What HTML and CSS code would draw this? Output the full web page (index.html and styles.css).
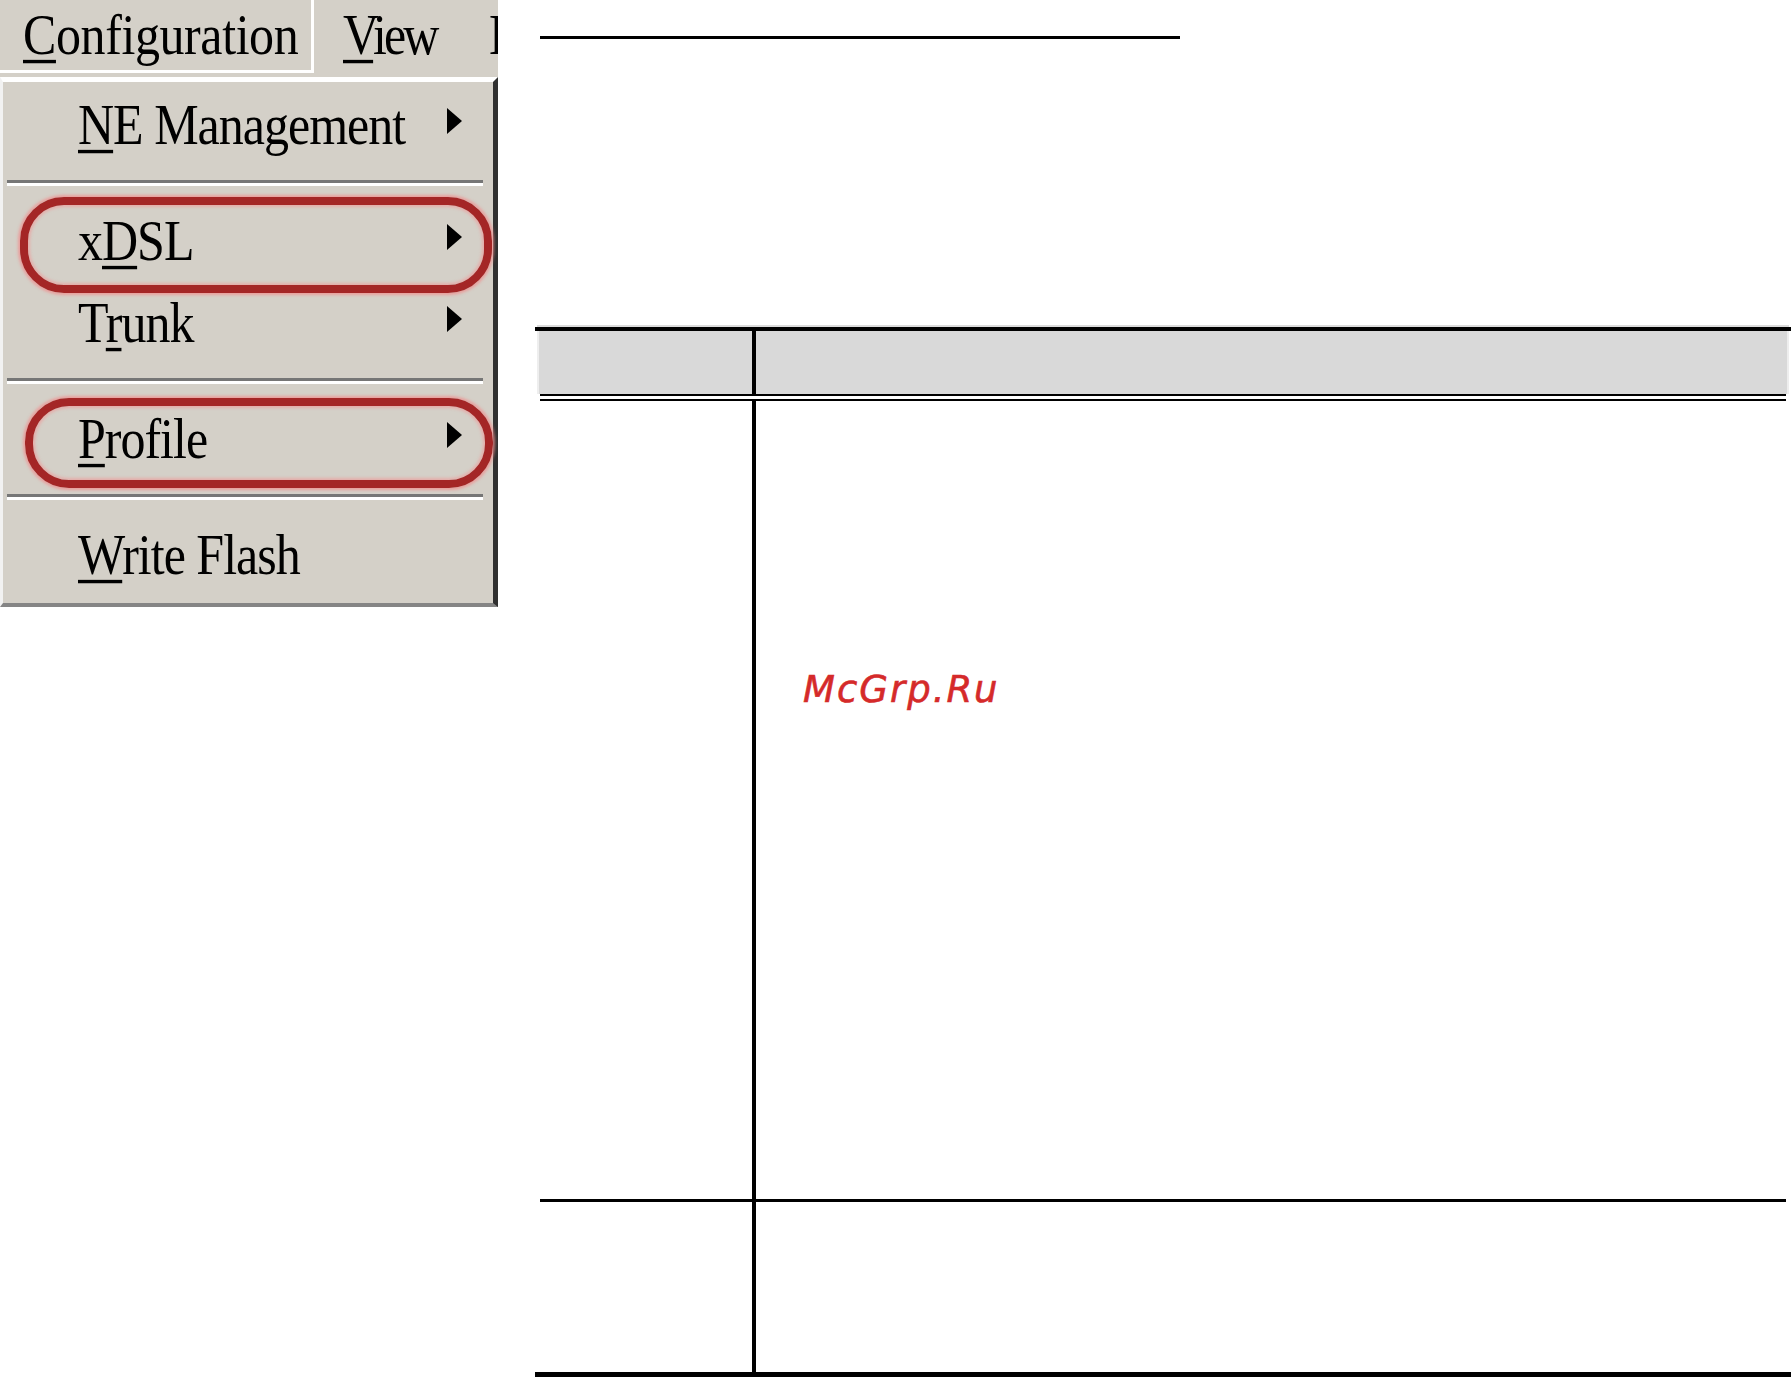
FILE: index.html
```html
<!DOCTYPE html>
<html lang="en">
<head>
<meta charset="utf-8">
<title>Configuration menu</title>
<link rel="stylesheet" href="styles.css">
</head>
<body>
<div class="page">
  <div class="app">
    <div class="menubar">
      <div class="tab tab-active"><span class="label"><u>C</u>onfiguration</span></div>
      <div class="tab tab-view"><span class="label"><u>V</u>iew</span></div>
      <div class="tab tab-help"><span class="label">Help</span></div>
    </div>
    <div class="menu">
      <div class="item"><span class="label"><u>N</u>E Management</span><span class="arrow"></span></div>
      <div class="sep"></div>
      <div class="item"><span class="label">x<u>D</u>SL</span><span class="arrow"></span></div>
      <div class="item"><span class="label">T<u>r</u>unk</span><span class="arrow"></span></div>
      <div class="sep"></div>
      <div class="item"><span class="label"><u>P</u>rofile</span><span class="arrow"></span></div>
      <div class="sep"></div>
      <div class="item"><span class="label"><u>W</u>rite Flash</span></div>
      <div class="ring ring-xdsl"></div>
      <div class="ring ring-profile"></div>
    </div>
  </div>
  <div class="doc">
    <div class="title-rule"></div>
    <div class="spec">
      <div class="spec-cap"></div>
      <div class="spec-top"></div>
      <div class="spec-head">
        <div class="head-c1"></div>
        <div class="head-c2"></div>
      </div>
      <div class="spec-dbl"></div>
      <div class="spec-row row-main">
        <div class="c1"></div>
        <div class="c2"><span class="watermark">McGrp.Ru</span></div>
      </div>
      <div class="spec-line"></div>
      <div class="spec-row row-last">
        <div class="c1"></div>
        <div class="c2"></div>
      </div>
      <div class="spec-bottom"></div>
    </div>
  </div>
</div>
</body>
</html>
```

FILE: styles.css
```css
html, body {
  margin: 0;
  padding: 0;
  background: #ffffff;
}

.page {
  display: flex;
  align-items: flex-start;
  width: 1791px;
  height: 1377px;
  overflow: hidden;
}

/* ---------- application menu (left) ---------- */
.app {
  flex: none;
  width: 498px;
  background: #d4d0c8;
  font-family: "Liberation Serif", "Times New Roman", serif;
  font-size: 50px;
  color: #000;
}

.label {
  display: inline-block;
  line-height: 50px;
  letter-spacing: -1px;
  transform: scaleY(1.13);
  white-space: nowrap;
}

.label u {
  text-decoration-thickness: 3px;
  text-underline-offset: 5px;
}

.menubar {
  display: flex;
  height: 77px;
  overflow: hidden;
  position: relative;
}

.tab {
  display: flex;
  align-items: center;
  height: 70px;
  flex: none;
}

.tab-active {
  width: 288px;
  padding-left: 23px;
  border-right: 3px solid #ffffff;
  border-bottom: 3px solid #ffffff;
}

.tab-active .label {
  letter-spacing: -0.4px;
}

.tab-view {
  margin-left: 29px;
  width: 146px;
}

.tab-view .label {
  letter-spacing: -3px;
}

.tab-help {
  width: 20px;
}

.menu {
  position: relative;
  border-top: 5px solid #ffffff;
  border-left: 3px solid #f2f2f2;
  border-right: 5px solid #303030;
  border-bottom: 4px solid #858585;
  padding: 2px 0 7px 0;
}

.item {
  display: flex;
  align-items: center;
  height: 82px;
  padding-left: 75px;
  padding-right: 31px;
}

.arrow {
  margin-left: auto;
  margin-bottom: 8px;
  width: 0;
  height: 0;
  border-left: 15px solid #000;
  border-top: 13px solid transparent;
  border-bottom: 13px solid transparent;
}

.sep {
  margin: 14px 10px 14px 4px;
  height: 3px;
  background: #767676;
  border-bottom: 3px solid #ffffff;
}

/* red annotation rings drawn over the menu */
.ring {
  position: absolute;
  border: 8px solid #a42626;
  border-radius: 44px;
  box-shadow: 0 0 3px 2px rgba(240, 140, 140, 0.75), inset 0 0 3px 2px rgba(240, 150, 150, 0.6);
  pointer-events: none;
}

.ring-xdsl {
  top: 115px;
  left: 17px;
  width: 456px;
  height: 80px;
}

.ring-profile {
  top: 316px;
  left: 22px;
  width: 452px;
  height: 74px;
}

/* ---------- document (right) ---------- */
.doc {
  flex: 1;
  margin-left: 37px;
}

.title-rule {
  margin-top: 36px;
  margin-left: 5px;
  width: 640px;
  height: 3px;
  background: #000;
}

.spec {
  margin-top: 286px;
}

.spec-cap {
  height: 2px;
  margin: 0 2px;
  background: #dcdcdc;
}

.spec-top {
  height: 4px;
  background: #000;
}

.spec-head {
  display: flex;
  height: 63px;
  margin: 0 2px;
  background: #d9d9d9;
  border-left: 2px solid #eeeeee;
  border-right: 2px solid #eeeeee;
}

.head-c1 {
  width: 213px;
  height: 64px;
  border-right: 4px solid #000;
}

.head-c2 {
  flex: 1;
}

.spec-dbl {
  height: 3px;
  margin: 0 5px;
  border-top: 2px solid #000;
  border-bottom: 2px solid #000;
}

.spec-row {
  display: flex;
}

.row-main {
  height: 798px;
}

.row-last {
  height: 170px;
}

.spec-row .c1 {
  width: 217px;
  border-right: 4px solid #000;
}

.spec-row .c2 {
  flex: 1;
}

.row-main .c2 {
  padding-top: 270px;
  padding-left: 47px;
}

.watermark {
  font-family: "DejaVu Sans", "Liberation Sans", sans-serif;
  font-style: italic;
  font-size: 37px;
  line-height: 37px;
  letter-spacing: 2px;
  color: #d52a2a;
  -webkit-text-stroke: 0.6px #d52a2a;
}

.spec-line {
  height: 3px;
  margin: 0 5px;
  background: #000;
}

.spec-bottom {
  height: 5px;
  background: #000;
}
```
